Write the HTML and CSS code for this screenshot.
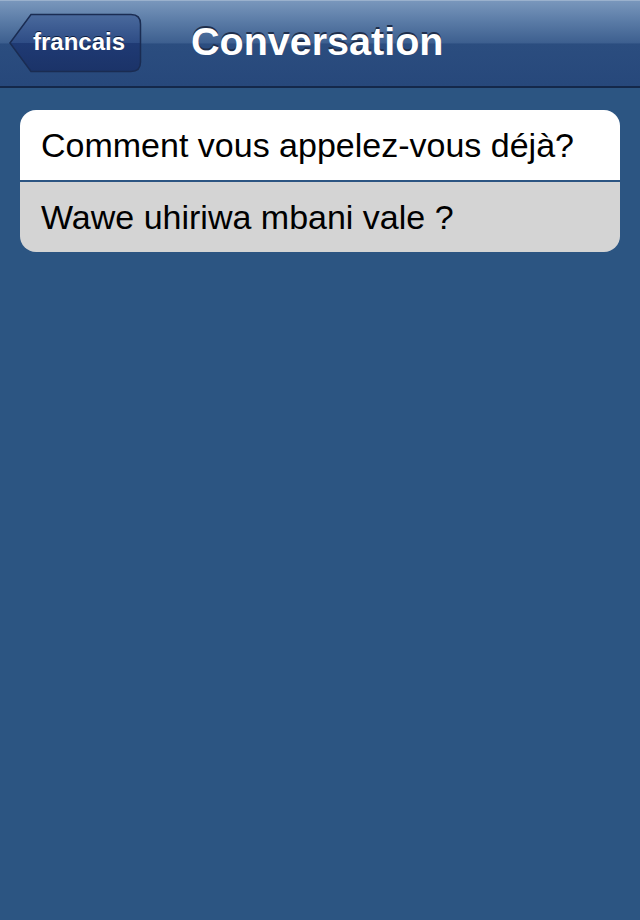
FILE: index.html
```html
<!DOCTYPE html>
<html>
<head>
<meta charset="utf-8">
<link rel="stylesheet" href="styles.css">
</head>
<body>
<div class="app">
  <header class="navbar">
    <div class="back">
      <svg class="back-shape" width="133" height="60" viewBox="0 0 133 60">
        <defs>
          <linearGradient id="bg" x1="0" y1="0" x2="0" y2="1">
            <stop offset="0" stop-color="#4a6a9d"/>
            <stop offset="0.5" stop-color="#2e4c85"/>
            <stop offset="0.5" stop-color="#1f3a74"/>
            <stop offset="1" stop-color="#1b3368"/>
          </linearGradient>
        </defs>
        <path d="M1 30 L22 1.5 H122 Q131.5 1.5 131.5 11 V49 Q131.5 58.5 122 58.5 H22 Z" fill="url(#bg)" stroke="#1a2c52" stroke-width="1.5"/>
      </svg>
      <span class="back-label">francais</span>
    </div>
    <h1 class="title">Conversation</h1>
  </header>
  <main class="content">
    <div class="card">
      <div class="row row-top">Comment vous appelez-vous déjà?</div>
      <div class="row row-bottom">Wawe uhiriwa mbani vale ?</div>
    </div>
  </main>
</div>
</body>
</html>
```
FILE: styles.css
```css
html, body {
  margin: 0;
  padding: 0;
}
body {
  width: 640px;
  height: 920px;
  background: #2c5582;
  font-family: "Liberation Sans", Arial, sans-serif;
  overflow: hidden;
}
.app {
  display: flex;
  flex-direction: column;
  height: 920px;
}
.navbar {
  height: 88px;
  box-sizing: border-box;
  border-bottom: 2px solid #14284a;
  background: linear-gradient(to bottom, #7a98bd 0%, #5a7ba6 25%, #3d5f8f 50%, #2b4d7f 51%, #27487b 100%);
  display: flex;
  align-items: center;
  padding-left: 9px;
  box-shadow: inset 0 1px 0 #9ab1cd;
}
.back {
  position: relative;
  width: 133px;
  height: 60px;
  margin-top: -1px;
  flex: none;
}
.back-shape {
  display: block;
}
.back-label {
  position: absolute;
  left: 24px;
  top: 0;
  height: 60px;
  line-height: 58px;
  color: #fff;
  font-weight: bold;
  font-size: 24px;
  text-shadow: 0 -1px 0 #0e1e40;
}
.title {
  margin: -4px 0 0 49px;
  color: #fff;
  font-size: 39.5px;
  font-weight: bold;
  text-shadow: 0 -2px 0 #1f2f4c;
}
.content {
  padding: 22px 20px;
}
.card {
  border-radius: 16px;
  overflow: hidden;
  display: flex;
  flex-direction: column;
}
.row {
  height: 70px;
  box-sizing: border-box;
  padding-left: 21px;
  display: flex;
  align-items: center;
  font-size: 34px;
  color: #000;
}
.row-top {
  background: #fff;
  border-bottom: 2px solid #2c5582;
  height: 72px;
}
.row-bottom {
  background: #d4d4d4;
}
```
